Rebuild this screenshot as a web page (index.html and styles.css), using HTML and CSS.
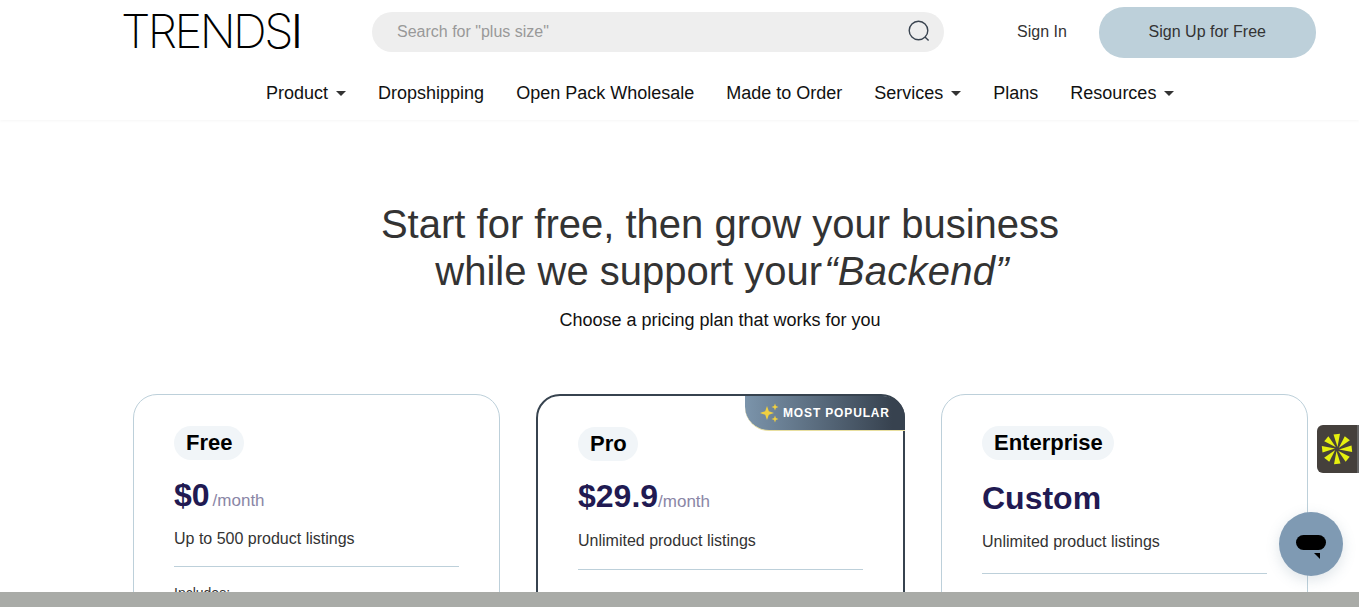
FILE: index.html
```html
<!DOCTYPE html>
<html lang="en">
<head>
    <meta charset="UTF-8">
    <meta name="viewport" content="width=device-width, initial-scale=1.0">
    <title>Plans - Trendsi</title>
    <link rel="stylesheet" href="styles.css">
</head>
<body>

<!-- Header -->
<header class="site-header">
    <div class="header-top">
        <a class="logo" href="#">TRENDS<span class="logo-end">I</span></a>
        <div class="search-box">
            <span class="search-placeholder">Search for "plus size"</span>
            <svg class="search-icon" width="24" height="24" viewBox="0 0 24 24" fill="none" stroke="#3a4450" stroke-width="1.4">
                <circle cx="11.5" cy="10.500" r="9.3"/>
                <path d="M18 17l3.600 3.400"/>
            </svg>
        </div>
        <a class="sign-in" href="#">Sign In</a>
        <a class="sign-up" href="#">Sign Up for Free</a>
    </div>
    <nav class="main-nav">
        <a href="#" class="has-caret">Product</a>
        <a href="#">Dropshipping</a>
        <a href="#">Open Pack Wholesale</a>
        <a href="#">Made to Order</a>
        <a href="#" class="has-caret">Services</a>
        <a href="#">Plans</a>
        <a href="#" class="has-caret">Resources</a>
    </nav>
</header>

<!-- Intro -->
<section class="intro">
    <h1>Start for free, then grow your business<br>while we support your<em>“Backend”</em></h1>
    <p>Choose a pricing plan that works for you</p>
</section>

<!-- Pricing cards -->
<section class="plans">
    <div class="plan-card plan-free">
        <span class="plan-name">Free</span>
        <div class="plan-price">$0<span class="per-month">/month</span></div>
        <p class="plan-listings">Up to 500 product listings</p>
        <hr class="plan-line">
        <p class="plan-includes">Includes:</p>
    </div>

    <div class="plan-card plan-popular">
        <div class="popular-badge">
            <svg width="20" height="20" viewBox="0 0 20 20" fill="#f0d040">
                <path d="M7 3l1.800 5.200 5.200 1.800-5.200 1.800L7 17l-1.800-5.200L0 10l5.200-1.800z"/>
                <path d="M15 0.500l.9 2.600 2.600.9-2.600.9-.9 2.600-.9-2.600-2.600-.9 2.600-.9z"/>
                <path d="M15 12.500l.9 2.600 2.600.9-2.600.9-.9 2.600-.9-2.600-2.600-.9 2.600-.9z"/>
            </svg>
            <span>MOST POPULAR</span>
        </div>
        <span class="plan-name">Pro</span>
        <div class="plan-price">$29.9<span class="per-month">/month</span></div>
        <p class="plan-listings">Unlimited product listings</p>
        <hr class="plan-line">
    </div>

    <div class="plan-card plan-enterprise">
        <span class="plan-name">Enterprise</span>
        <div class="plan-price">Custom</div>
        <p class="plan-listings">Unlimited product listings</p>
        <hr class="plan-line">
    </div>
</section>

<!-- Floating widgets -->
<div class="rewards-tab">
    <svg width="32" height="32" viewBox="0 0 32 32" fill="#e6f00e">
        <path id="spoke" d="M12.500 1.500L19 .8 16.500 14z"/>
        <use href="#spoke" transform="rotate(45 16 16)"/>
        <use href="#spoke" transform="rotate(90 16 16)"/>
        <use href="#spoke" transform="rotate(135 16 16)"/>
        <use href="#spoke" transform="rotate(180 16 16)"/>
        <use href="#spoke" transform="rotate(225 16 16)"/>
        <use href="#spoke" transform="rotate(270 16 16)"/>
        <use href="#spoke" transform="rotate(315 16 16)"/>
    </svg>
</div>

<button class="chat-btn" aria-label="Chat">
    <span class="chat-bubble"></span>
    <span class="chat-tail"></span>
</button>

<div class="bottom-bar"></div>

</body>
</html>
```

FILE: styles.css
```css
* {
    box-sizing: border-box;
}

html,
body {
    height: 100%;
    overflow: hidden;
}

body {
    margin: 0;
    font-family: "Liberation Sans", Arial, sans-serif;
    background-color: white;
    color: #333;
}

a {
    color: inherit;
    text-decoration: none;
}

/* Header */
.site-header {
    height: 120px;
    box-shadow: 0 1px 3px rgba(0, 0, 0, 0.04);
}

.header-top {
    display: flex;
    align-items: center;
    height: 64px;
    padding-left: 121px;
}

.logo {
    width: 251px;
    margin-top: -4px;
    font-family: Inter, sans-serif;
    font-size: 47px;
    font-weight: 150;
    letter-spacing: -2.6px;
    color: black;
}

.logo-end {
    font-weight: 300;
}

.search-box {
    display: flex;
    align-items: center;
    justify-content: space-between;
    width: 572px;
    height: 40px;
    margin-top: -1px;
    padding: 0 13px 0 25px;
    background-color: #eee;
    border-radius: 20px;
}

.search-placeholder {
    font-size: 16px;
    color: #999;
}

.sign-in {
    margin-left: 73px;
    font-size: 16px;
}

.sign-up {
    display: flex;
    align-items: center;
    justify-content: center;
    width: 217px;
    height: 51px;
    margin-left: 32px;
    font-size: 16px;
    background-color: #bdd0da;
    border-radius: 25px;
}

.main-nav {
    display: flex;
    gap: 32px;
    padding-left: 266px;
    padding-top: 19px;
    font-size: 18px;
    line-height: 21px;
    color: #111;
}

.has-caret::after {
    content: "";
    display: inline-block;
    margin-left: 8px;
    vertical-align: 3px;
    border-top: 5px solid #333;
    border-left: 5px solid transparent;
    border-right: 5px solid transparent;
}

/* Intro */
.intro {
    padding-top: 81px;
    text-align: center;
    padding-left: 81px;
}

.intro h1 {
    margin: 0;
    font-size: 40px;
    font-weight: 400;
    line-height: 47px;
}

.intro em {
    margin-left: 2px;
    margin-right: -4px;
    letter-spacing: 0.25px;
}

.intro p {
    margin: 15px 0 0;
    font-size: 18px;
    line-height: 21px;
    color: #111;
}

/* Pricing cards */
.plans {
    display: grid;
    grid-template-columns: 367px 369px 367px;
    gap: 36px;
    margin-top: 63px;
    padding-left: 133px;
}

.plan-card {
    position: relative;
    height: 300px;
    padding: 31px 40px;
    border: 1px solid #bdd0da;
    border-radius: 24px;
}

.plan-popular {
    border: 2px solid #37434f;
}

.plan-name {
    display: inline-block;
    height: 34px;
    padding: 0 11.5px 0 12px;
    font-size: 22px;
    font-weight: 700;
    line-height: 34px;
    color: black;
    background-color: #f1f5f8;
    border-radius: 17px;
}

.plan-price {
    margin-top: 17px;
    font-size: 32px;
    font-weight: 700;
    line-height: 37px;
    color: #211a52;
}

.per-month {
    font-size: 17px;
    font-weight: 400;
    color: #8a86a6;
}

.plan-free .per-month {
    margin-left: 3px;
}

.plan-listings {
    margin: 12px 0 0;
    font-size: 16px;
    line-height: 18px;
    color: #333;
}

.plan-line {
    height: 1px;
    margin: 19px 0 0;
    background-color: #bdd0da;
    border: none;
}

.plan-free .plan-listings {
    margin-top: 11px;
}

.plan-free .plan-line {
    margin-top: 18px;
}

.plan-includes {
    margin: 18px 0 0;
    font-size: 14px;
    color: #333;
}

.plan-enterprise .plan-price {
    margin-top: 20px;
}

.plan-enterprise .plan-listings {
    margin-top: 16px;
}

.plan-enterprise .plan-line {
    margin-top: 22px;
}

.popular-badge {
    position: absolute;
    top: 0;
    right: -2px;
    display: flex;
    align-items: center;
    gap: 3px;
    width: 160px;
    height: 35px;
    padding-left: 15px;
    font-size: 12px;
    font-weight: 700;
    letter-spacing: 0.85px;
    color: white;
    background: linear-gradient(90deg, #7b94ab, #37424f 92%);
    border-bottom: 1px solid #e8dfa0;
    border-radius: 0 22px 0 24px;
}

/* Floating widgets */
.rewards-tab {
    position: fixed;
    top: 425px;
    right: 0;
    display: flex;
    align-items: center;
    width: 42px;
    height: 48px;
    padding-left: 4px;
    background-color: #45403c;
    border-right: 2px solid #666;
    border-radius: 6px 0 0 6px;
}

.chat-btn {
    position: fixed;
    top: 512px;
    left: 1279px;
    width: 64px;
    height: 64px;
    padding: 0;
    background-color: #7f9ab3;
    border: none;
    border-radius: 50%;
    box-shadow: 0 4px 14px rgba(90, 120, 140, 0.2);
}

.chat-bubble {
    position: absolute;
    top: 23px;
    left: 17px;
    width: 30px;
    height: 15px;
    background-color: black;
    border-radius: 8px;
}

.chat-tail {
    position: absolute;
    top: 41px;
    left: 35px;
    border-top: 6px solid black;
    border-left: 6px solid transparent;
}

.bottom-bar {
    position: fixed;
    left: 0;
    right: 0;
    bottom: 0;
    height: 15px;
    background-color: #a9aba7;
}
```
